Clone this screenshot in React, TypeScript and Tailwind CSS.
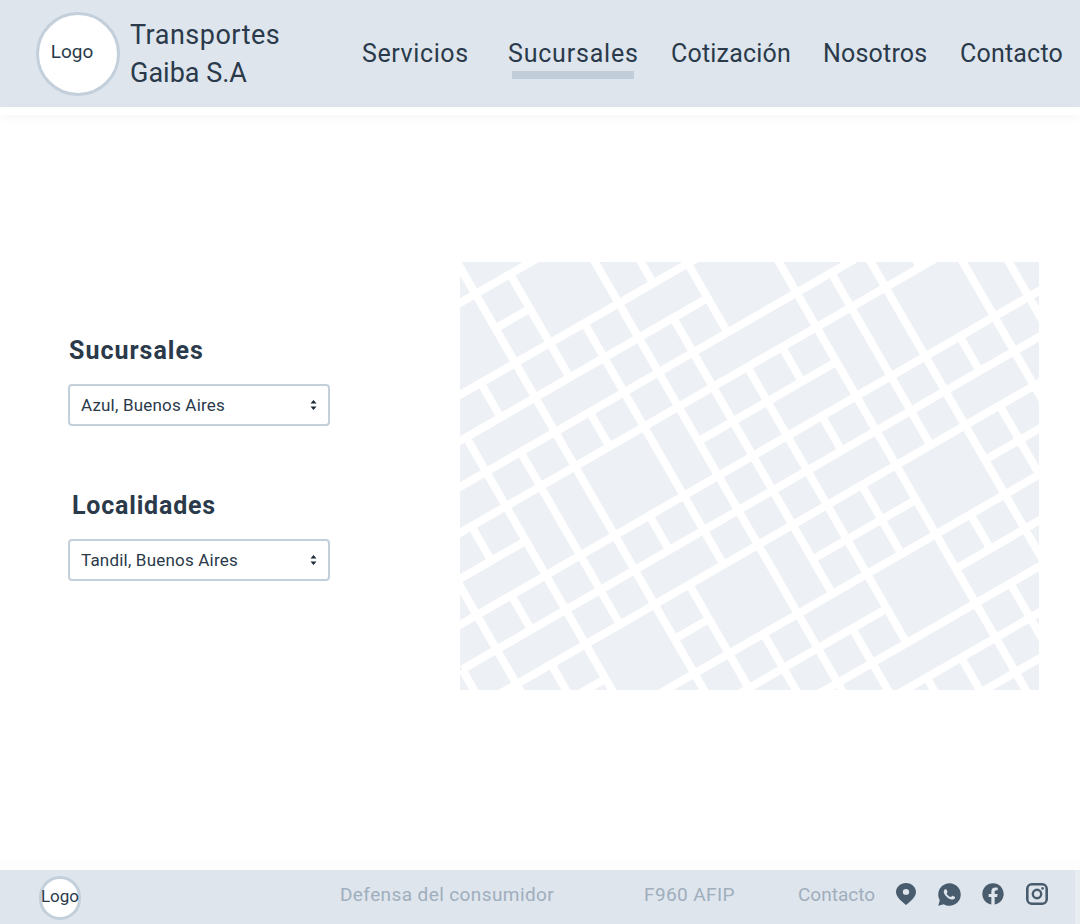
import React from 'react';
import { FaFacebook } from 'react-icons/fa';
import { RiWhatsappFill } from 'react-icons/ri';

// map streets, written on a skewed grid: rising streets are rows, falling streets are columns
const rising: [number, number, number][] = [
  [0, -1, 2], [1, 0, 1], [2, -2, 6], [3, -3, 5], [4, -3, 9], [5, -4, 11],
  [6, -4, -2], [6, 3, 7], [7, -5, 13], [8, -5, 12], [9, -5, 12],
  [10, -3, -2], [10, 0, 1], [10, 4, 7], [10, 9, 11], [11, -1, 10],
  [12, 0, 5], [12, 7, 10], [13, 2, 9], [14, 4, 9], [15, 6, 8],
];

const falling: [number, number, number][] = [
  [-5, 8, 9], [-4, 6, 10], [-3, 5, 6], [-3, 7, 8], [-3, 9, 10], [-2, 3, 11],
  [-1, 2, 3], [-1, 4, 9], [0, -1, 12], [1, 0, 3], [1, 4, 5], [1, 7, 8], [1, 9, 13],
  [2, 2, 9], [2, 11, 13], [3, 0, 14], [4, 1, 2], [4, 3, 11], [4, 12, 14],
  [5, 1, 4], [5, 5, 13], [5, 14, 15], [6, 5, 6], [6, 7, 8], [6, 9, 11], [6, 14, 15],
  [7, 3, 16], [8, 4, 9], [8, 11, 12], [8, 13, 15], [9, 4, 13], [10, 4.8, 5],
  [10, 7, 8], [10, 9, 11], [11, 5, 10], [12, 5, 8],
];

const px = (i: number, j: number) => 15.5 + 34.5 * i + 19.9 * j;
const py = (i: number, j: number) => 32 - 19.9 * i + 34.5 * j;

const StreetMap: React.FC = () => (
  <div className="w-[579px] h-[428px] bg-[#edf0f5] overflow-hidden">
    <svg width="579" height="428" viewBox="0 0 579 428">
      <g stroke="#ffffff" strokeWidth="8" fill="none">
        {rising.map(([j, a, b]) => (
          <line key={`r${j}${a}`} x1={px(a, j)} y1={py(a, j)} x2={px(b, j)} y2={py(b, j)} />
        ))}
        {falling.map(([i, a, b]) => (
          <line key={`f${i}${a}`} x1={px(i, a)} y1={py(i, a)} x2={px(i, b)} y2={py(i, b)} />
        ))}
      </g>
    </svg>
  </div>
);

const Chooser: React.FC<{ title: string; value: string; titleClass: string }> = ({ title, value, titleClass }) => (
  <div>
    <h2 className={`text-[25px] leading-[32px] font-bold text-[#2a3a4a] ${titleClass}`}>{title}</h2>
    <div className="relative mt-[17px] w-[262px]">
      <select
        defaultValue={value}
        className="w-full h-[42px] appearance-none bg-white border-2 border-[#c3cfda] rounded-[4px] pl-[11px] pt-[1px] text-[17px] tracking-[0.2px] text-[#2a3a4a] outline-none"
      >
        <option>{value}</option>
      </select>
      <svg className="absolute right-[13px] top-[15px]" width="7" height="12" viewBox="0 0 7 12">
        <path d="M3.5 1 L6.5 4.5 H0.5 Z M3.5 11 L6.5 7.5 H0.5 Z" fill="#1c2a38" />
      </svg>
    </div>
  </div>
);

const PinIcon = () => (
  <svg width="20" height="22" viewBox="0 0 20 24" preserveAspectRatio="none">
    <path
      fillRule="evenodd"
      d="M10 0C4.5 0 0 4.4 0 9.8 0 15.3 6 20.3 10 24c4-3.7 10-8.7 10-14.2C20 4.4 15.5 0 10 0z M10 6.5a3.2 3.2 0 1 1 0 6.4 3.2 3.2 0 0 1 0-6.4z"
      fill="#485c6e"
    />
  </svg>
);

const InstagramIcon = () => (
  <svg width="22" height="22" viewBox="0 0 22 22" fill="none" stroke="#485c6e">
    <rect x="1.3" y="1.3" width="19.4" height="19.4" rx="4.5" strokeWidth="2.6" />
    <circle cx="11" cy="11" r="4.2" strokeWidth="2.4" />
    <circle cx="16.6" cy="5.4" r="1.3" fill="#485c6e" stroke="none" />
  </svg>
);

const navItems = [
  { label: 'Servicios', box: 'w-[146px] tracking-[0.6px]' },
  { label: 'Sucursales', box: 'w-[163px] tracking-[0.8px]' },
  { label: 'Cotización', box: 'w-[152px] tracking-[0.2px]' },
  { label: 'Nosotros', box: 'w-[137px] tracking-[0.2px]' },
  { label: 'Contacto', box: 'w-[102px] tracking-[0.2px]' },
];

export default function App() {
  return (
    <div className="w-[1080px] h-[924px] flex flex-col bg-white font-['Roboto',sans-serif] text-[#2a3a4a] overflow-hidden">
      <header className="h-[107px] bg-[#dee5ed] flex items-center shrink-0">
        <div className="ml-[36px] w-[84px] h-[84px] shrink-0 rounded-full bg-white border-[3px] border-[#c3cfda] flex items-center justify-center pr-[12px] pb-[2px] text-[19px]">
          Logo
        </div>
        <div className="ml-[10px] mt-[1px] w-[170px] shrink-0 text-[27px] leading-[38px] tracking-[0.5px]">
          Transportes
          <br />
          <span className="tracking-normal">Gaiba S.A</span>
        </div>
        <nav className="ml-[62px] flex text-[25px]">
          {navItems.map(item => (
            <a key={item.label} className={`relative whitespace-nowrap ${item.box}`}>
              {item.label}
              {item.label === 'Sucursales' && (
                <span className="absolute left-[4px] w-[122px] top-[36px] h-[8px] bg-[#c1cdd8]" />
              )}
            </a>
          ))}
        </nav>
      </header>
      <div className="h-[8px] bg-white shadow-[0_3px_8px_rgba(0,0,0,0.04)] shrink-0" />

      <main className="flex-1 flex">
        <div className="w-[392px] pl-[68px] pt-[220px] flex flex-col gap-[64px]">
          <Chooser title="Sucursales" value="Azul, Buenos Aires" titleClass="ml-[1px] tracking-[1px]" />
          <Chooser title="Localidades" value="Tandil, Buenos Aires" titleClass="ml-[4px] tracking-[0.8px]" />
        </div>
        <div className="pl-[68px] pt-[147px]">
          <StreetMap />
        </div>
      </main>

      <div className="h-[9px] bg-[#fdfdfd] shrink-0" />
      <footer className="h-[54px] bg-[#e8edf2] shrink-0">
        <div className="h-full w-[1075px] bg-[#dee5ed] flex items-center">
          <div className="ml-[39px] w-[42px] h-[44px] mt-[2px] shrink-0 rounded-full bg-white border-[3px] border-[#c3cfda] flex items-center justify-center pb-[2px] text-[17px]">
            Logo
          </div>
          <div className="ml-[259px] flex items-center text-[19px] tracking-[0.4px] whitespace-nowrap text-[#a0aebc] -mt-[4px]">
            <span className="w-[304px]">Defensa del consumidor</span>
            <span className="w-[154px]">F960 AFIP</span>
            <span className="w-[98px] tracking-normal">Contacto</span>
          </div>
          <div className="flex items-center gap-[22px] text-[#485c6e] text-[22px] -mt-[6px]">
            <PinIcon />
            <RiWhatsappFill className="text-[27px] -mx-[2.5px]" />
            <FaFacebook />
            <InstagramIcon />
          </div>
        </div>
      </footer>
    </div>
  );
}
